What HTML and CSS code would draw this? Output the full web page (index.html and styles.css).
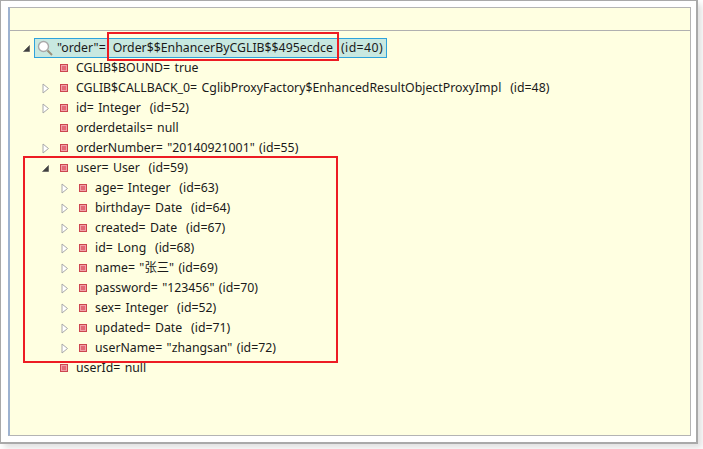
FILE: index.html
```html
<!DOCTYPE html>
<html lang="en">
<head>
<meta charset="utf-8">
<title>Variables</title>
<link rel="stylesheet" href="styles.css">
</head>
<body>
<svg width="0" height="0" class="defs">
  <symbol id="open" viewBox="0 0 9 9"><path d="M7.5 1.5V7.5H1.5Z" fill="#404040" stroke="#505050" stroke-width=".6"/></symbol>
  <symbol id="closed" viewBox="0 0 9 11"><path d="M2 1L7.5 5.5L2 10Z" fill="#fff" stroke="#a8a8a8"/></symbol>
  <symbol id="field" viewBox="0 0 8 8"><rect x=".5" y=".5" width="7" height="7" fill="#f0a0a8" stroke="#cc4650"/><rect x="2" y="2" width="4" height="4" fill="#e26a76"/></symbol>
</svg>
<main class="window">
  <section class="panel">
    <div class="titlebar"></div>
    <div class="tree">
      <div class="row root">
        <svg class="tw"><use href="#open"/></svg>
        <span class="selected">
          <svg class="search" viewBox="0 0 16 16"><circle cx="6.5" cy="6.5" r="5" fill="#fff" stroke="#a9a9a9" stroke-width="1.4"/><path d="M10.5 10.5L15 15" stroke="#9a8f7a" stroke-width="2"/></svg>
          <span class="label">"order"=</span>
          <span class="label type">Order$$EnhancerByCGLIB$$495ecdce</span>
          <span class="label objid">(id=40)</span>
        </span>
      </div>
      <div class="row d1"><span class="tw"></span><svg class="fi"><use href="#field"/></svg><span class="label">CGLIB$BOUND= true</span></div>
      <div class="row d1"><svg class="tw"><use href="#closed"/></svg><svg class="fi"><use href="#field"/></svg><span class="label">CGLIB$CALLBACK_0= CglibProxyFactory$EnhancedResultObjectProxyImpl&nbsp; (id=48)</span></div>
      <div class="row d1"><svg class="tw"><use href="#closed"/></svg><svg class="fi"><use href="#field"/></svg><span class="label">id= Integer&nbsp; (id=52)</span></div>
      <div class="row d1"><span class="tw"></span><svg class="fi"><use href="#field"/></svg><span class="label">orderdetails= null</span></div>
      <div class="row d1"><svg class="tw"><use href="#closed"/></svg><svg class="fi"><use href="#field"/></svg><span class="label">orderNumber= "20140921001" (id=55)</span></div>
      <div class="row d1"><svg class="tw"><use href="#open"/></svg><svg class="fi"><use href="#field"/></svg><span class="label">user= User&nbsp; (id=59)</span></div>
      <div class="row d2"><svg class="tw"><use href="#closed"/></svg><svg class="fi"><use href="#field"/></svg><span class="label">age= Integer&nbsp; (id=63)</span></div>
      <div class="row d2"><svg class="tw"><use href="#closed"/></svg><svg class="fi"><use href="#field"/></svg><span class="label">birthday= Date&nbsp; (id=64)</span></div>
      <div class="row d2"><svg class="tw"><use href="#closed"/></svg><svg class="fi"><use href="#field"/></svg><span class="label">created= Date&nbsp; (id=67)</span></div>
      <div class="row d2"><svg class="tw"><use href="#closed"/></svg><svg class="fi"><use href="#field"/></svg><span class="label">id= Long&nbsp; (id=68)</span></div>
      <div class="row d2"><svg class="tw"><use href="#closed"/></svg><svg class="fi"><use href="#field"/></svg><span class="label">name= "张三" (id=69)</span></div>
      <div class="row d2"><svg class="tw"><use href="#closed"/></svg><svg class="fi"><use href="#field"/></svg><span class="label">password= "123456" (id=70)</span></div>
      <div class="row d2"><svg class="tw"><use href="#closed"/></svg><svg class="fi"><use href="#field"/></svg><span class="label">sex= Integer&nbsp; (id=52)</span></div>
      <div class="row d2"><svg class="tw"><use href="#closed"/></svg><svg class="fi"><use href="#field"/></svg><span class="label">updated= Date&nbsp; (id=71)</span></div>
      <div class="row d2"><svg class="tw"><use href="#closed"/></svg><svg class="fi"><use href="#field"/></svg><span class="label">userName= "zhangsan" (id=72)</span></div>
      <div class="row d1"><span class="tw"></span><svg class="fi"><use href="#field"/></svg><span class="label">userId= null</span></div>
    </div>
  </section>
  <div class="mark mark-class"></div>
  <div class="mark mark-user"></div>
</main>
</body>
</html>
```
FILE: styles.css
```css
html, body { margin: 0; padding: 0; background: #fff; width: 703px; height: 449px; overflow: hidden; }
.defs { position: absolute; }
.window {
  position: relative; box-sizing: border-box; width: 698px; height: 444px;
  background: #fff; border: 1px solid #a9a9a9; border-width: 1px 2px 2px 1px;
  padding: 6px 5px 6px 7px; box-shadow: 4px 4px 6px rgba(0,0,0,.12);
}
.panel {
  box-sizing: border-box; height: 429px; background: #ffffe1;
  border: 1px solid #b4b4b4; border-left: 2px solid #9db2d0;
}
.titlebar { height: 22px; border-bottom: 1px solid #b0b0b0; }
.tree { padding-top: 7px; font: 12.3px/20px "Noto Sans", "Noto Sans CJK SC", sans-serif; word-spacing: 1.2px; color: #1a1a1a; }
.row { display: flex; align-items: center; height: 20px; white-space: nowrap; }
.row.root { padding-left: 12px; }
.row.d1 { padding-left: 31px; }
.row.d2 { padding-left: 50px; }
.tw { width: 9px; height: 11px; flex: none; }
.fi { width: 8px; height: 8px; margin-left: 10px; margin-right: 8px; flex: none; }
.selected { display: flex; align-items: center; box-sizing: border-box; width: 353px; height: 20px; margin-left: 3px; padding: 0 2px; background: #c8e8e0; border: 1px solid #2ea3dc; }
.search { width: 16px; height: 16px; margin-right: 4px; }
.type { margin-left: 7px; }
.objid { margin-left: 8px; letter-spacing: .4px; }
.mark { position: absolute; border: 2px solid #ed1c24; box-sizing: border-box; }
.mark-class { left: 106px; top: 31px; width: 232px; height: 29px; }
.mark-user { left: 22px; top: 155px; width: 315px; height: 207px; }
```
